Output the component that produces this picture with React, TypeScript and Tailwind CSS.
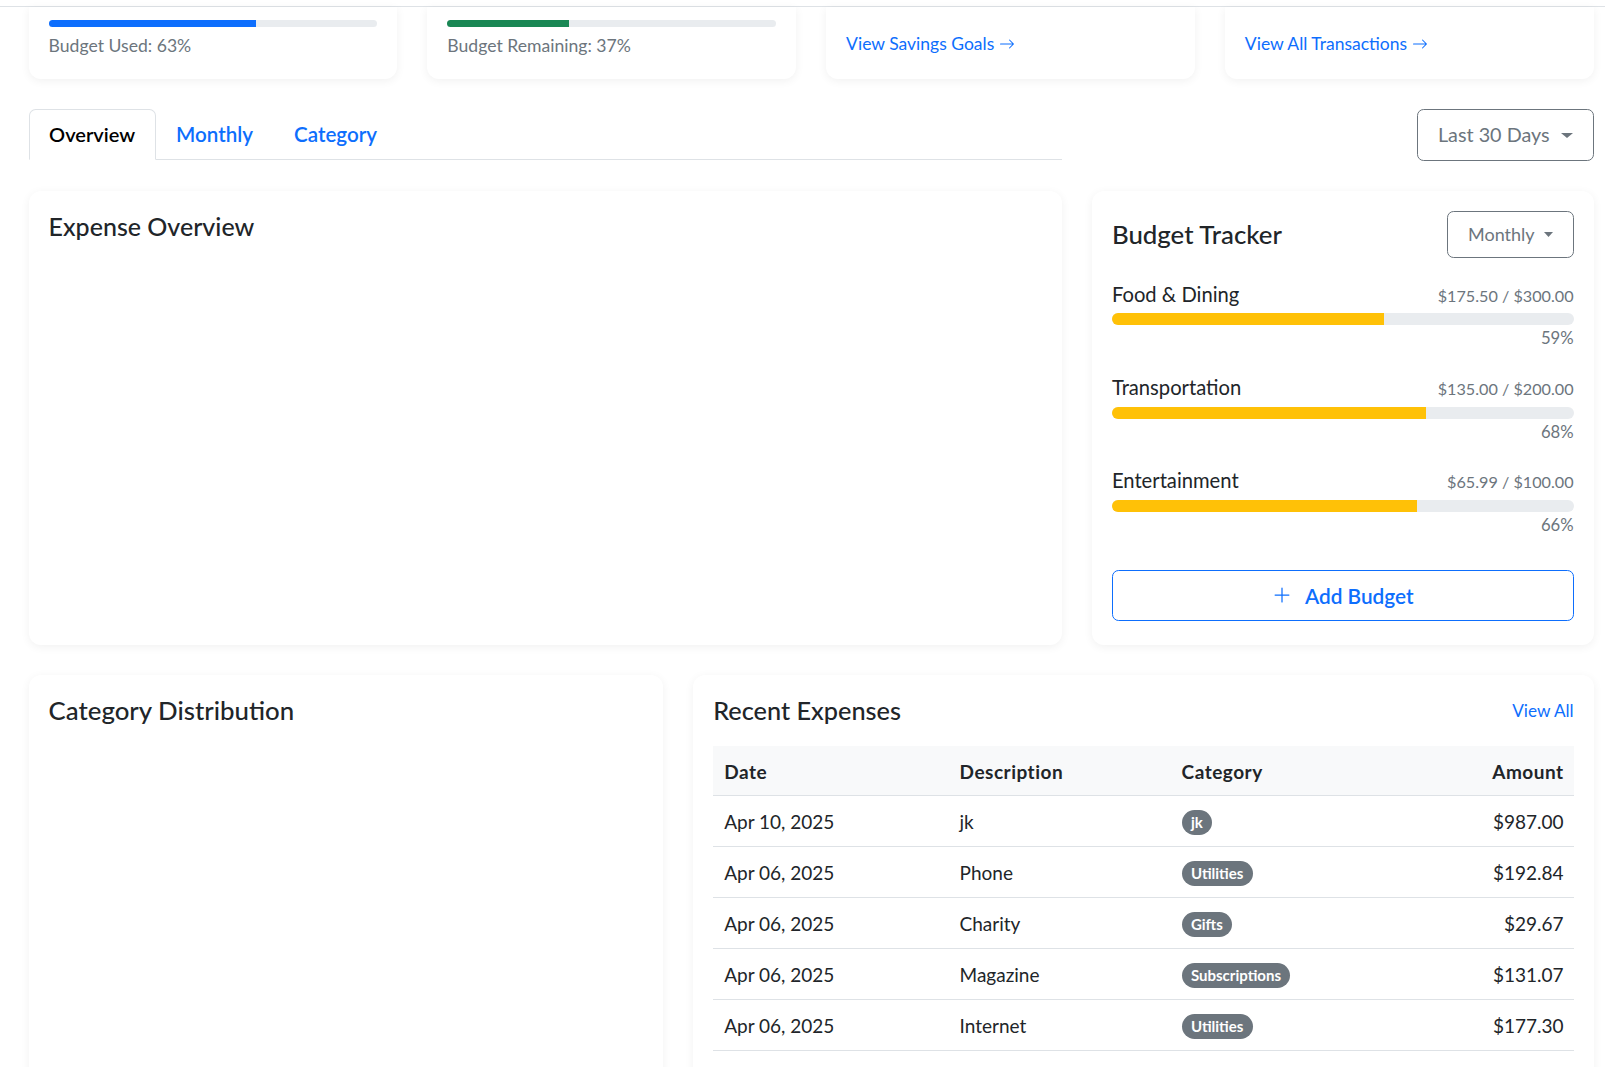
import React from "react";

function Caret({ w = 11, h = 5.5 }: { w?: number; h?: number }) {
  return (
    <svg width={w} height={h} viewBox={`0 0 ${w} ${h}`} className="shrink-0">
      <polygon points={`0,0 ${w},0 ${w / 2},${h}`} fill="currentColor" />
    </svg>
  );
}

function ArrowRight() {
  return (
    <svg width="16" height="16" viewBox="0 0 16 16" fill="currentColor" className="inline-block ml-[5px] align-[-2px]">
      <path
        fillRule="evenodd"
        d="M1 8a.5.5 0 0 1 .5-.5h11.793l-3.147-3.146a.5.5 0 0 1 .708-.708l4 4a.5.5 0 0 1 0 .708l-4 4a.5.5 0 0 1-.708-.708L13.293 8.5H1.5A.5.5 0 0 1 1 8z"
      />
    </svg>
  );
}

function PlusIcon() {
  return (
    <svg width="20" height="20" viewBox="0 0 16 16" fill="currentColor" className="shrink-0">
      <path
        fillRule="evenodd"
        d="M8 2a.5.5 0 0 1 .5.5v5h5a.5.5 0 0 1 0 1h-5v5a.5.5 0 0 1-1 0v-5h-5a.5.5 0 0 1 0-1h5v-5A.5.5 0 0 1 8 2Z"
      />
    </svg>
  );
}

function ProgressCard({ value, fill, label }: { value: number; fill: string; label: string }) {
  return (
    <div className="rounded-b-[12px] bg-white px-5 pt-[13px] pb-[20.5px] shadow-[0_2px_10px_rgba(0,0,0,0.06)]">
      <div className="h-[6.6px] w-full overflow-hidden rounded-full bg-[#e9ecef]">
        <div className={`h-full ${fill}`} style={{ width: `${value}%` }} />
      </div>
      <div className="mt-[6px] text-[17.6px] leading-[25.8px] text-[#6c757d]">{label}</div>
    </div>
  );
}

function LinkCard({ label }: { label: string }) {
  return (
    <div className="flex flex-col justify-end rounded-b-[12px] bg-white px-5 pb-[22px] shadow-[0_2px_10px_rgba(0,0,0,0.06)]">
      <a className="text-[17.5px] leading-[1.5] text-[#0d6efd]">
        {label}
        <ArrowRight />
      </a>
    </div>
  );
}

const budgets = [
  { name: "Food & Dining", spent: "$175.50", total: "$300.00", pct: 59 },
  { name: "Transportation", spent: "$135.00", total: "$200.00", pct: 68 },
  { name: "Entertainment", spent: "$65.99", total: "$100.00", pct: 66 },
];

const expenses = [
  { date: "Apr 10, 2025", desc: "jk", cat: "jk", amount: "$987.00" },
  { date: "Apr 06, 2025", desc: "Phone", cat: "Utilities", amount: "$192.84" },
  { date: "Apr 06, 2025", desc: "Charity", cat: "Gifts", amount: "$29.67" },
  { date: "Apr 06, 2025", desc: "Magazine", cat: "Subscriptions", amount: "$131.07" },
  { date: "Apr 06, 2025", desc: "Internet", cat: "Utilities", amount: "$177.30" },
];

export default function App() {
  return (
    <div className="min-h-screen overflow-hidden bg-white font-['Lato',sans-serif] text-[#212529]">
      <div className="h-[7px] border-b border-[#dee2e6]" />
      <div className="pl-[28.6px] pr-[11.4px]">
        {/* summary cards */}
        <div className="grid grid-cols-4 gap-[30px]">
          <ProgressCard value={63} fill="bg-[#0d6efd]" label="Budget Used: 63%" />
          <ProgressCard value={37} fill="bg-[#198754]" label="Budget Remaining: 37%" />
          <LinkCard label="View Savings Goals" />
          <LinkCard label="View All Transactions" />
        </div>

        {/* tabs + range */}
        <div className="mt-[30.6px] grid grid-cols-3 items-start gap-[30px]">
          <div className="col-span-2 flex h-[51px] items-start border-b border-[#dee2e6]">
            <button className="h-[51px] rounded-t-[6.6px] border border-[#dee2e6] border-b-white bg-white px-[19.5px] text-[20px] font-semibold leading-[29px] text-black">
              Overview
            </button>
            <button className="h-[50px] border border-transparent px-[19.5px] text-[20.6px] font-semibold leading-[29px] text-[#0d6efd]">
              Monthly
            </button>
            <button className="h-[50px] border border-transparent px-[19.5px] text-[20.6px] font-semibold leading-[29px] text-[#0d6efd]">
              Category
            </button>
          </div>
          <div className="flex justify-end">
            <button className="flex items-center gap-[11px] rounded-[6.6px] border border-[#6c757d] px-[20px] py-[11px] text-[19.8px] leading-[27.4px] text-[#6c757d]">
              Last 30 Days
              <Caret w={12} h={5} />
            </button>
          </div>
        </div>

        {/* overview + budget tracker */}
        <div className="mt-[30px] grid grid-cols-3 gap-[30px]">
          <div className="col-span-2 rounded-[12px] bg-white p-5 shadow-[0_2px_10px_rgba(0,0,0,0.06)]">
            <h4 className="text-[25px] font-medium leading-[1.2]">Expense Overview</h4>
          </div>
          <div className="rounded-[12px] bg-white px-5 pt-5 pb-[24px] shadow-[0_2px_10px_rgba(0,0,0,0.06)]">
            <div className="flex items-center justify-between">
              <h4 className="text-[25.8px] font-medium leading-[1.2]">Budget Tracker</h4>
              <button className="flex items-center gap-[9px] rounded-[6.6px] border border-[#6c757d] px-[20px] py-[9.2px] text-[18px] leading-[1.5] text-[#6c757d]">
                Monthly
                <Caret w={9} h={5} />
              </button>
            </div>
            <div className="mt-[21.5px] flex flex-col gap-[21.6px]">
              {budgets.map((b) => (
                <div key={b.name}>
                  <div className="flex items-baseline justify-between">
                    <span className="text-[20.2px] leading-[29.7px]">{b.name}</span>
                    <span className="text-[16.2px] leading-[1.5] text-[#6c757d]">
                      {b.spent} / {b.total}
                    </span>
                  </div>
                  <div className="mt-[4px] h-[12px] w-full overflow-hidden rounded-full bg-[#e9ecef]">
                    <div className="h-full bg-[#ffc107]" style={{ width: `${b.pct}%` }} />
                  </div>
                  <div className="mt-[1px] text-right text-[16.7px] leading-[25px] text-[#6c757d]">{b.pct}%</div>
                </div>
              ))}
            </div>
            <button className="mt-[31.5px] flex h-[51.4px] w-full items-center justify-center gap-[13px] rounded-[6.6px] border border-[#0d6efd] text-[20.8px] font-semibold text-[#0d6efd]">
              <PlusIcon />
              Add Budget
            </button>
          </div>
        </div>

        {/* distribution + recent */}
        <div className="mt-[30.3px] grid grid-cols-12 gap-[30px]">
          <div className="col-span-5 h-[440px] rounded-[12px] bg-white p-5 shadow-[0_2px_10px_rgba(0,0,0,0.06)]">
            <h4 className="text-[25.8px] font-medium leading-[1.2]">Category Distribution</h4>
          </div>
          <div className="col-span-7 h-[440px] rounded-[12px] bg-white p-5 shadow-[0_2px_10px_rgba(0,0,0,0.06)]">
            <div className="flex items-center justify-between">
              <h4 className="text-[25.3px] font-medium leading-[1.2]">Recent Expenses</h4>
              <a className="text-[17.2px] leading-[1.5] text-[#0d6efd]">View All</a>
            </div>
            <table className="mt-[20px] w-full table-fixed border-collapse text-[19px] leading-[26px]">
              <colgroup>
                <col className="w-[235.4px]" />
                <col className="w-[222px]" />
                <col className="w-[220px]" />
                <col />
              </colgroup>
              <thead>
                <tr className="bg-[#f8f9fa]">
                  <th className="border-b border-[#dee2e6] px-[11px] pt-[13px] pb-[10px] text-left font-bold tracking-[0.5px]">Date</th>
                  <th className="border-b border-[#dee2e6] px-[11px] pt-[13px] pb-[10px] text-left font-bold tracking-[0.5px]">Description</th>
                  <th className="border-b border-[#dee2e6] px-[11px] pt-[13px] pb-[10px] text-left font-bold tracking-[0.5px]">Category</th>
                  <th className="border-b border-[#dee2e6] px-[10px] pt-[13px] pb-[10px] text-right font-bold tracking-[0.5px]">Amount</th>
                </tr>
              </thead>
              <tbody>
                {expenses.map((e, i) => (
                  <tr key={i}>
                    <td className="border-b border-[#dee2e6] px-[11px] pt-[13.5px] pb-[10.5px]">{e.date}</td>
                    <td className="border-b border-[#dee2e6] px-[11px] pt-[13.5px] pb-[10.5px]">{e.desc}</td>
                    <td className="border-b border-[#dee2e6] px-[11px] pt-[13.5px] pb-[10.5px]">
                      <div className="flex h-[26px] items-start pt-[0.5px]">
                        <span className="flex h-[25.5px] shrink-0 items-center rounded-full bg-[#6c757d] px-[9.4px] text-[15px] font-bold leading-none text-white">
                          {e.cat}
                        </span>
                      </div>
                    </td>
                    <td className="border-b border-[#dee2e6] px-[10px] pt-[13.5px] pb-[10.5px] text-right">{e.amount}</td>
                  </tr>
                ))}
              </tbody>
            </table>
          </div>
        </div>
      </div>
    </div>
  );
}
